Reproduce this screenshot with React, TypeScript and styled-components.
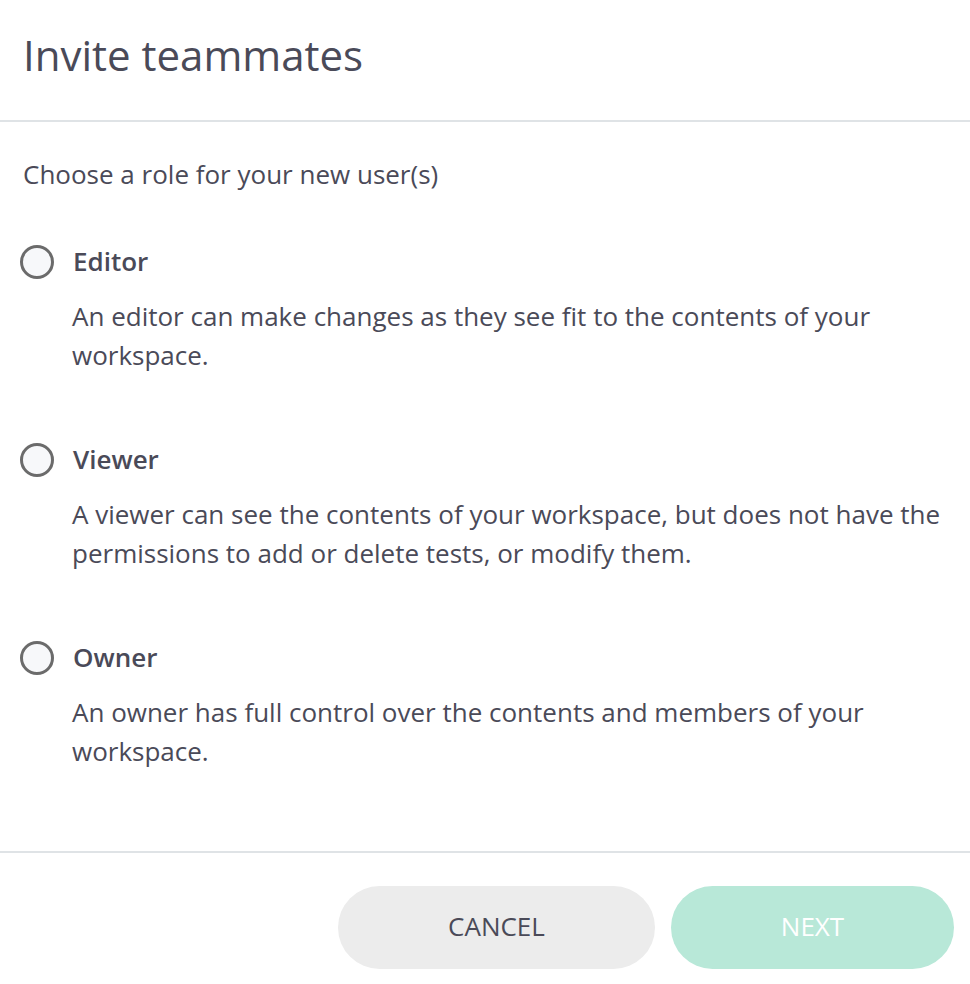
import React from "react";
import styled, { createGlobalStyle } from "styled-components";

const Global = createGlobalStyle`
  html, body { margin: 0; padding: 0; background: #fff; }
  body { font-family: "Open Sans", "Liberation Sans", sans-serif; color: #4a4a58; }
  * { box-sizing: border-box; }
`;

const Modal = styled.div`
  width: 970px;
  height: 984px;
  display: flex;
  flex-direction: column;
  background: #fff;
`;

const Header = styled.header`
  height: 122px;
  display: flex;
  align-items: center;
  padding: 0 23px 12px;
  border-bottom: 2px solid #dfe3e6;
`;

const Title = styled.h1`
  margin: 0;
  font-size: 42px;
  font-weight: 400;
  color: #4a4a58;
`;

const Body = styled.main`
  flex: 1;
  padding: 33px 23px 0;
  display: flex;
  flex-direction: column;
`;

const Prompt = styled.p`
  margin: 0 0 48px;
  font-size: 26px;
  line-height: 39px;
`;

const RoleList = styled.div`
  display: flex;
  flex-direction: column;
  gap: 65px;
`;

const Role = styled.label`
  display: grid;
  grid-template-columns: 34px 1fr;
  column-gap: 19px;
  row-gap: 16px;
  align-items: center;
  margin-left: -3px;
  cursor: pointer;
`;

const Radio = styled.span`
  width: 34px;
  height: 34px;
  border-radius: 50%;
  border: 3px solid #6b6b6b;
  background: #f7f8fa;
`;

const RoleName = styled.span`
  font-size: 26px;
  font-weight: 600;
  line-height: 39px;
  color: #4a4a58;
`;

const RoleDesc = styled.p`
  grid-column: 2;
  margin: 0;
  font-size: 26px;
  line-height: 39px;
  color: #4a4a58;
  margin-left: -1px;
`;

const Footer = styled.footer`
  border-top: 2px solid #dfe3e6;
  height: 133px;
  display: flex;
  justify-content: flex-end;
  align-items: flex-start;
  gap: 16px;
  padding: 33px 16px 0;
`;

const Button = styled.button<{ $primary?: boolean }>`
  height: 83px;
  padding: 0 0 4px;
  border: none;
  border-radius: 42px;
  font-family: "Open Sans", "Liberation Sans", sans-serif;
  font-size: 26px;
  font-weight: 400;
  text-transform: uppercase;
  cursor: pointer;
  width: ${(p) => (p.$primary ? "283px" : "317px")};
  background: ${(p) => (p.$primary ? "#b8e8d8" : "#ececec")};
  color: ${(p) => (p.$primary ? "#ffffff" : "#4a4a58")};
`;

const roles = [
  {
    name: "Editor",
    desc: "An editor can make changes as they see fit to the contents of your workspace.",
  },
  {
    name: "Viewer",
    desc: "A viewer can see the contents of your workspace, but does not have the permissions to add or delete tests, or modify them.",
  },
  {
    name: "Owner",
    desc: "An owner has full control over the contents and members of your workspace.",
  },
];

export default function App() {
  return (
    <>
      <Global />
      <Modal>
        <Header>
          <Title>Invite teammates</Title>
        </Header>
        <Body>
          <Prompt>Choose a role for your new user(s)</Prompt>
          <RoleList>
            {roles.map((r) => (
              <Role key={r.name}>
                <Radio />
                <RoleName>{r.name}</RoleName>
                <RoleDesc>{r.desc}</RoleDesc>
              </Role>
            ))}
          </RoleList>
        </Body>
        <Footer>
          <Button>Cancel</Button>
          <Button $primary>Next</Button>
        </Footer>
      </Modal>
    </>
  );
}
